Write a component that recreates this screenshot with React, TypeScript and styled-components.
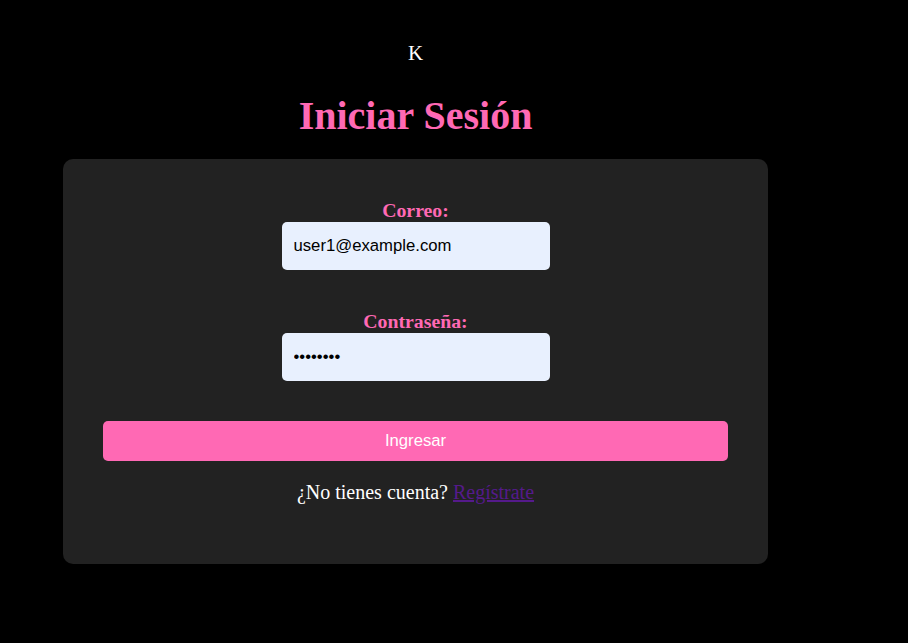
import React from "react";
import styled, { createGlobalStyle } from "styled-components";

const GlobalStyle = createGlobalStyle`
  html, body {
    background: #000;
  }
  body {
    margin: 8px;
    font-family: "Liberation Serif", "Times New Roman", serif;
    color: #fff;
  }
`;

const Page = styled.div`
  width: 815px;
  padding-top: 33px;
  text-align: center;
`;

const Logo = styled.div`
  font-size: 21px;
  color: #fff;
`;

const Title = styled.h1`
  margin: 26px 0 20px;
  font-size: 40px;
  font-weight: bold;
  color: #ff69b4;
`;

const Card = styled.div`
  margin: 0 55px;
  padding: 40px;
  background: #222;
  border-radius: 10px;
`;

const Form = styled.form`
  display: flex;
  flex-direction: column;
  align-items: center;
`;

const Field = styled.div`
  display: flex;
  flex-direction: column;
  align-items: center;
  margin-bottom: 40px;
`;

const Label = styled.label`
  font-size: 19.8px;
  line-height: 22px;
  font-weight: bold;
  color: #ff69b4;
  margin-bottom: 1px;
`;

const Input = styled.input`
  box-sizing: border-box;
  width: 268px;
  height: 48px;
  padding: 0 12px;
  border: none;
  border-radius: 5px;
  background: #e8f0fe;
  color: #000;
  font-family: "Liberation Sans", Arial, sans-serif;
  font-size: 16.7px;
  outline: none;
`;

const Button = styled.button`
  width: 100%;
  height: 40px;
  border: none;
  border-radius: 5px;
  background: #ff69b4;
  color: #fff;
  font-family: "Liberation Sans", Arial, sans-serif;
  font-size: 16.7px;
  cursor: pointer;
`;

const Footer = styled.p`
  margin: 20px 0;
  font-size: 20px;
  color: #fff;
`;

const Link = styled.a`
  color: #551a8b;
  text-decoration: underline;
`;

export default function App() {
  return (
    <>
      <GlobalStyle />
      <Page>
        <Logo>K</Logo>
        <Title>Iniciar Sesión</Title>
        <Card>
          <Form onSubmit={(e) => e.preventDefault()}>
            <Field>
              <Label htmlFor="email">Correo:</Label>
              <Input id="email" type="email" defaultValue="user1@example.com" />
            </Field>
            <Field>
              <Label htmlFor="password">Contraseña:</Label>
              <Input id="password" type="password" defaultValue="password" />
            </Field>
            <Button type="submit">Ingresar</Button>
          </Form>
          <Footer>
            ¿No tienes cuenta? <Link href="#registro">Regístrate</Link>
          </Footer>
        </Card>
      </Page>
    </>
  );
}
